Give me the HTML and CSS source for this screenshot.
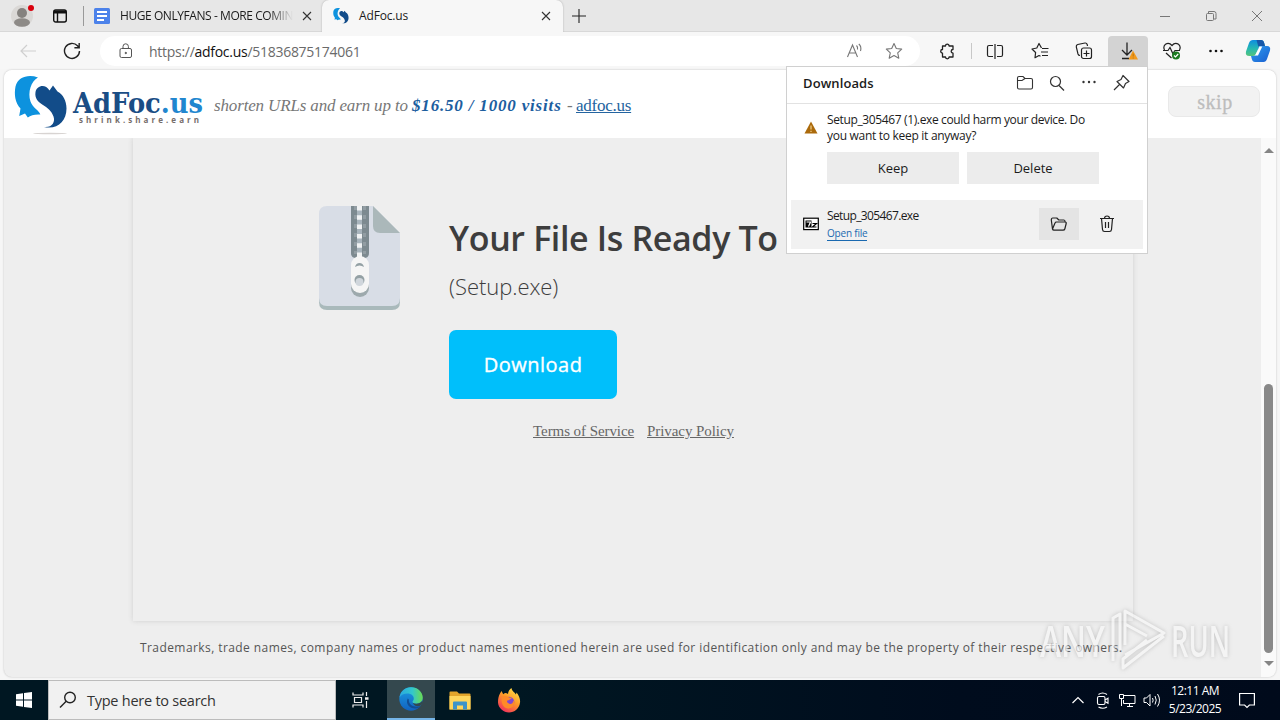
FILE: index.html
```
<!DOCTYPE html>
<html lang="en">
<head>
<meta charset="utf-8">
<title>AdFoc.us</title>
<link rel="stylesheet" href="styles.css">
</head>
<body>
<div class="tabs">
  <div class="profile"><svg width="26" height="28" viewBox="0 0 26 28"><circle cx="12" cy="14" r="11" fill="#dad8d6"/><circle cx="12" cy="11" r="5" fill="#85827f"/><ellipse cx="12" cy="20.5" rx="8" ry="4.2" fill="#8d8a87"/><circle cx="21" cy="6" r="3" fill="#d9000d"/></svg></div>
  <div class="tab-menu"><svg width="16" height="16" viewBox="0 0 16 16" fill="none" stroke="#111" stroke-width="1.4"><rect x="1.7" y="2" width="12.6" height="12" rx="2"/><path d="M2 4h12" stroke-width="3"/><path d="M5.5 4v10"/></svg></div>
  <div class="tab">
    <svg width="16" height="16" viewBox="0 0 16 16"><rect width="16" height="16" rx="1.5" fill="#4c82ea"/><path d="M3 4h10M3 8h10M3 12h7" stroke="#fff" stroke-width="1.8"/></svg>
    <span class="tab-title faded">HUGE ONLYFANS - MORE COMIN</span>
    <svg class="close" width="10" height="10" viewBox="0 0 10 10" stroke="#333" stroke-width="1.1"><path d="M1 1l8 8M9 1l-8 8"/></svg>
  </div>
  <div class="tab active">
    <svg width="16" height="16" viewBox="14 76 54 54"><use href="#swirl"/></svg>
    <span class="tab-title adf">AdFoc.us</span>
    <svg class="close" width="10" height="10" viewBox="0 0 10 10" stroke="#333" stroke-width="1.1"><path d="M1 1l8 8M9 1l-8 8"/></svg>
  </div>
  <div class="new-tab"><svg width="14" height="14" viewBox="0 0 14 14" stroke="#222" stroke-width="1.1"><path d="M7 0v14M0 7h14"/></svg></div>
  <div class="window-buttons">
    <svg width="46" height="32" viewBox="0 0 46 32" fill="none" stroke="#777"><path d="M18 16.5h10"/></svg>
    <svg width="46" height="32" viewBox="0 0 46 32" fill="none" stroke="#777"><rect x="18.500" y="13.500" width="7" height="7" rx="1"/><path d="M20.500 13v-1.500h5.500q2 0 2 2v5.500h-2"/></svg>
    <svg width="46" height="32" viewBox="0 0 46 32" fill="none" stroke="#777"><path d="M18 11l10 10M28 11l-10 10"/></svg>
  </div>
</div>

<div class="toolbar">
  <div class="slot back"><svg width="16" height="14" viewBox="0 0 16 14" fill="none" stroke="#cfcfcf" stroke-width="1.2"><path d="M16 7H1M7 1L1 7l6 6"/></svg></div>
  <div class="slot reload"><svg width="18" height="18" viewBox="0 0 18 18" fill="none" stroke="#222" stroke-width="1.4"><path d="M16.500 9a7.500 7.500 0 1 1-2-5.200L16 5.500M16.200 1v4.800h-4.800"/></svg></div>
  <div class="address">
    <svg class="lock" width="14" height="16" viewBox="0 0 14 16" fill="none" stroke="#555"><rect x="1" y="5.500" width="11.500" height="9" rx="1.500"/><path d="M4 5.500V3.500a2.700 2.700 0 0 1 5.400 0v2"/><circle cx="6.800" cy="10" r=".7" fill="#555"/></svg>
    <span class="url">https://<b>adfoc.us</b>/51836875174061</span>
    <svg class="read" width="18" height="16" viewBox="0 0 18 16" fill="none" stroke="#777" stroke-width="1.1"><path d="M2.500 14L7.500 2l5 12M4 10h7M11.500 2.500q1.500 1.500 1 4M13.800 1q3 2.500 1.700 7"/></svg>
    <svg class="fav" width="18" height="18" viewBox="0 0 18 18" fill="none" stroke="#777" stroke-width="1.1"><path d="M9 1.500l2.300 5 5.400.6-4 3.700 1.100 5.400L9 13.500l-4.800 2.700 1.100-5.400-4-3.700 5.400-.6z" stroke-linejoin="round"/></svg>
  </div>
  <div class="slot ext"><svg width="18" height="18" viewBox="0 0 18 18" fill="none" stroke="#222" stroke-width="1.3"><path d="M4.500 4h3a1.800 1.800 0 0 1 3.600 0H15v3.500a1.800 1.800 0 1 0 0 3.600V15h-3.900a1.800 1.800 0 0 1-3.600 0h-3v-3.900a1.800 1.800 0 0 1 0-3.600z" stroke-linejoin="round"/></svg></div>
  <div class="rule"></div>
  <div class="slot split"><svg width="18" height="16" viewBox="0 0 18 16" fill="none" stroke="#222" stroke-width="1.2"><path d="M7 2.500H3q-1.500 0-1.500 1.500v8q0 1.500 1.500 1.500h4M11 2.500h4q1.500 0 1.500 1.500v8q0 1.500-1.500 1.500h-4M9 1v15"/></svg></div>
  <div class="slot"><svg width="18" height="18" viewBox="0 0 18 18" fill="none" stroke="#222" stroke-width="1.2" stroke-linejoin="round"><path d="M10.500 6L8 1.500 5.800 6 1 7l3.600 3.500L4 15.700l4-2.200 1.500.8M11 6.500h6.500M10 10h7M11 13.500h6"/></svg></div>
  <div class="slot"><svg width="18" height="18" viewBox="0 0 18 18" fill="none" stroke="#222" stroke-width="1.2"><rect x="6.500" y="6" width="10" height="10.500" rx="2"/><path d="M11.500 8.500v6M8.500 11.500h6M5 13.500Q3.500 13.500 3 12L1.300 5Q1 3 2.700 2.500L10 1q1.700-.2 2.200 1.500l.3 1.500"/></svg></div>
  <div class="slot dl"><svg width="20" height="20" viewBox="0 0 20 20" fill="none" stroke="#222" stroke-width="1.300"><path d="M9 1.500v12M4 9l5 5 5-5M4 17.500h7"/><path d="M15 9.500L20 18.500H10.500z" fill="#f39a1c" stroke="none"/><path d="M15.200 12.500v3M15.200 16.500v1" stroke="#b87414" stroke-width="1"/></svg></div>
  <div class="slot heart"><svg width="20" height="18" viewBox="0 0 20 18" fill="none" stroke="#222" stroke-width="1.200"><path d="M2.500 8Q.800 4.500 3.500 2.300 7 .2 10 3.500 13-.2 16.500 2.300 19.200 4.500 17.500 8M1 8.500h5l2-3 2.800 6L13 8.500h5M4 11l5.500 5"/><circle cx="14" cy="13.500" r="4" fill="#1b7a20" stroke="none"/><path d="M12 13.500l1.500 1.500 2.700-3" stroke="#fff"/></svg></div>
  <div class="slot"><svg width="16" height="4" viewBox="0 0 16 4" fill="#111"><circle cx="2.500" cy="2" r="1.300"/><circle cx="8" cy="2" r="1.300"/><circle cx="13.500" cy="2" r="1.300"/></svg></div>
  <div class="slot copilot"><svg width="26" height="24" viewBox="0 0 26 24">
    <defs><linearGradient id="cp1" x1="0" y1="0" x2="0" y2="1"><stop offset="0" stop-color="#0d8de0"/><stop offset=".55" stop-color="#26b9b0"/><stop offset="1" stop-color="#55c47c"/></linearGradient><linearGradient id="cp2" x1="0" y1="0" x2="1" y2="1"><stop offset="0" stop-color="#2e9df0"/><stop offset="1" stop-color="#1a5fd0"/></linearGradient></defs>
    <path d="M8 1h8q2.500 0 3.200 3l.8 3h-4q-2 0-2.700 2.500L11.500 14q-1 3-3.500 3H4.500Q0 17 1 12.500L4 4Q5 1 8 1z" fill="url(#cp1)"/><path d="M11.500 1H16q2.500 0 3.200 3l.8 3h-5q-1 0-1.700.5z" fill="#1757a8"/>
    <path d="M18.500 23H10q-2.500 0-3.200-3L6 17h2.500q2.500 0 3.200-3L13 9.500Q14 7 16 7h6q4 0 3 4.500l-3 8.500q-1 3-3.500 3z" fill="url(#cp2)"/><path d="M14.500 7.500h2.800L13 16.500h-3z" fill="#fff"/></svg></div>
</div>

<div class="viewport">
  <div class="site-header">
    <svg class="logo" width="192" height="64" viewBox="13 72 192 64">
      <defs><g id="swirl"><path d="M38 77.500C28 74 18 77 15.500 86.500c-1.500 8-.5 16 5 22l-1.300 7.500 5.800-2.500 2.800 4c3-2.500 7-3.300 12.500-3-1-4-7.500-6.500-9.800-13-3-9 .5-20.500 7.500-24z" fill="#0d92de"/><path d="M35.500 92c1-6 9.500-9 14-1.500l3.500-5 4.500 6c5.500 3 9 9 9 17 0 13-9.500 21.500-22.500 18.500 8 1 11.500-5 9.500-10.500-2-6-6.500-9-10.500-11.500-5-3-8.500-7-7.500-13z" fill="#124c89"/></g></defs>
      <use href="#swirl"/><ellipse cx="50" cy="133.500" rx="17" ry=".8" fill="#d8d4d2"/>
      <text class="logo-name" x="73" y="113" textLength="130" lengthAdjust="spacingAndGlyphs">AdFoc<tspan class="light">.us</tspan></text>
      <text class="logo-tag" x="79" y="123" textLength="120">shrink.share.earn</text>
    </svg>
    <div class="slogan"><span class="s1">shorten URLs and earn up to</span><span class="s2">$16.50 / 1000 visits</span><span class="s3">-</span><span class="s4">adfoc.us</span></div>
    <div class="skip">skip</div>
  </div>
  <div class="scroll-area">
    <div class="page">
      <div class="card">
        <svg class="zip" width="81" height="105" viewBox="0 0 81 105"><path d="M0 50H81V96q0 8-8 8H8q-8 0-8-8z" fill="#a9b9bb"/><path d="M8 0H54L81 27V92q0 8-8 8H8q-8 0-8-8V8Q0 0 8 0z" fill="#d8dde6"/><path d="M54 0L81 27H61q-7 0-7-7z" fill="#abb8ba"/><path d="M32 0H50V47q0 5-5 5h-8q-5 0-5-5z" fill="#7d8a90"/><path d="M36.500 0v48M45.500 0v48" stroke="#929da3" stroke-width="3" stroke-dasharray="4 5"/><path d="M40.500 0v51" stroke="#a9b5bd" stroke-width="5"/><path d="M40.500 0v52" stroke="#f0f2f3" stroke-width="5" stroke-dasharray="4.500 4.800"/><rect x="32" y="54" width="18" height="37" rx="9" fill="#9da9ad"/><rect x="32" y="50" width="18" height="37" rx="9" fill="#f5f5f5"/><path d="M36 61a4.700 5.500 0 0 1 9 0q-4.500-3-9 0z" fill="#93a0a4"/><circle cx="40.500" cy="74" r="5" fill="#93a0a4"/><circle cx="40.500" cy="76" r="4" fill="#d0d6dc"/></svg>
        <div class="offer">
          <div class="title">Your File Is Ready To</div>
          <div class="file">(Setup.exe)</div>
          <div class="download"><span>Download</span></div>
          <div class="legal"><span class="tos">Terms of Service</span><span class="pp">Privacy Policy</span></div>
        </div>
      </div>
      <div class="trademark">Trademarks, trade names, company names or product names mentioned herein are used for identification only and may be the property of their respective owners.</div>
    </div>
    <div class="scrollbar"><i class="up"></i><div class="track"><div class="thumb"></div></div><i class="down"></i></div>
  </div>
</div>

<div class="taskbar">
  <div class="start"><svg width="16" height="16" viewBox="0 0 16 16" fill="#fff"><path d="M0 2.200l7-1v6.300H0zM8 1l8-1v7.500H8zM0 8.500h7v6.300l-7-1zM8 8.500h8V16l-8-1z"/></svg></div>
  <div class="search"><svg width="18" height="18" viewBox="0 0 18 18" fill="none" stroke="#222" stroke-width="1.400"><circle cx="11" cy="6.500" r="5.300"/><path d="M7.200 10.300L1 16.500"/></svg><span>Type here to search</span></div>
  <div class="task"><svg width="18" height="16" viewBox="0 0 18 16" fill="none" stroke="#eee" stroke-width="1.200"><path d="M1 .5v2.500h10V.5M1 15.500V13h10v2.500M2.500 5.500h7v5h-7zM14.500 0v4M14.500 9v7"/><path d="M13 6.500h3.500" stroke-width="2.500"/></svg></div>
  <div class="task edge"><svg width="24" height="24" viewBox="0 0 24 24"><defs><linearGradient id="e1"><stop offset="0" stop-color="#2aa8e0"/><stop offset=".55" stop-color="#33c7cc"/><stop offset="1" stop-color="#6bdb50"/></linearGradient><linearGradient id="e2" x1="0" y1="0" x2="0" y2="1"><stop offset="0" stop-color="#1b9de2"/><stop offset="1" stop-color="#1262bf"/></linearGradient></defs><circle cx="12" cy="12" r="11.700" fill="url(#e2)"/><path d="M.5 10.500C1.500 4 6.500.3 12 .3c7 0 11.700 5 11.700 10.200 0 4-3 6.200-6.500 6.200-2.500 0-3.700-1-3.700-2 0-.8 1.300-1.200 1.300-3.200 0-2.700-2.700-5-6.300-5-3.700 0-6.500 1.500-8 4z" fill="url(#e1)"/><path d="M8.700 11.500C6 17 11 22 17 21.500c2 0 3.600-1.200 4.700-2.700C17 21 9.500 19 9.800 12.500z" fill="#124d93"/><path d="M13.500 14.700c0 1 1.200 2 3.700 2 2.500 0 4.600-1 5.800-2.700l.9 1-1.700 3.300c-4 1.900-8 .7-8.700-3.600z" fill="#34484e"/></svg></div>
  <div class="task"><svg width="22" height="19" viewBox="0 0 22 19"><path d="M.5 1.500Q.5.500 1.500.500H8l2 2h10.500q1 0 1 1V18.500H.5z" fill="#e3a52b"/><path d="M.5 5h21v13.500H.5z" fill="#ffd65d"/><path d="M4 18.500v-7q0-1 1-1h12q1 0 1 1v7h-4v-4H8v4z" fill="#3e94c9"/></svg></div>
  <div class="task fox"><svg width="24" height="25" viewBox="0 0 24 25"><defs><linearGradient id="f1" x1=".8" y1="0" x2=".2" y2="1"><stop offset="0" stop-color="#ffe24a"/><stop offset=".45" stop-color="#ff9a28"/><stop offset="1" stop-color="#f02960"/></linearGradient></defs><path d="M3 5.500L4.500 3l1.700 3.300L8 5q2 0 3 1c.3-3 1.800-5 3.500-6 .3 3 3 4 4.500 6.500l.5-2c2.500 3 4 6.500 3.500 10-.6 6-5.500 10-11 10S1.300 20 1 14.500C1 11 1.500 8 3 5.500z" fill="url(#f1)"/><circle cx="12" cy="14" r="5.300" fill="#8047d2"/><path d="M5 8.500c3-1.500 5-.5 7 1l3 .5-3.300 2.300c-2 0-2 1.500-1 2.500 2.500 2.500 6 .5 5.500-2.800 2.500 3.500 0 8.500-5 8.500C6 20.500 3.500 14 5 8.500z" fill="#ff8a28"/></svg></div>
  <div class="tray">
    <svg width="12" height="8" viewBox="0 0 12 8" fill="none" stroke="#fff" stroke-width="1.200"><path d="M.5 7L6 1.500 11.500 7"/></svg>
    <svg class="meet" width="14" height="17" viewBox="0 0 14 17" fill="none" stroke="#fff" stroke-width="1.100"><rect x="1.500" y="4.500" width="7.500" height="8" rx="1.500"/><path d="M9 8l3-1.700v5L9 9.500M2.500 2.500q4-3 8.500 0M2.500 15q4 2.500 8.500 0"/></svg>
    <svg class="net" width="17" height="15" viewBox="0 0 17 15" fill="none" stroke="#fff"><path d="M5 2.500h11v8H4.500V7M8 13.500h6M10.500 10.500v3M.5 1.500h4v4h-4zM2.500 5.500V13"/></svg>
    <svg class="vol" width="18" height="14" viewBox="0 0 18 14" fill="none" stroke="#fff"><path d="M1 5v4.500h2.500L7 13V1.500L3.500 5zM9.500 5q1.300 2 0 4.500M12 3q2.500 4 0 8.500M14.500 1q4 6 0 12.500"/></svg>
    <div class="clock"><span class="time">12:11 AM</span><span class="date">5/23/2025</span></div>
    <svg class="note" width="16" height="17" viewBox="0 0 16 17" fill="none" stroke="#fff" stroke-width="1.200"><path d="M.6 1.500h14.800v11.500h-5L8 15.500 5.600 13h-5z"/></svg>
  </div>
</div>

<div class="downloads">
  <div class="dl-head"><span class="dl-title">Downloads</span>
    <div class="dl-tools">
    <svg width="32" height="18" viewBox="0 0 32 18" fill="none" stroke="#333" stroke-width="1.100"><path d="M8.500 4q0-1.500 1.500-1.500h4l2 2h6q1.500 0 1.500 1.500v7.500q0 1.500-1.500 1.500H10q-1.500 0-1.500-1.500zM8.500 6.500H13l3-2"/></svg>
    <svg width="32" height="18" viewBox="0 0 32 18" fill="none" stroke="#333" stroke-width="1.200"><circle cx="14.500" cy="7.500" r="5"/><path d="M18 11.500l5 5"/></svg>
    <svg width="32" height="18" viewBox="0 0 32 18" fill="#333"><circle cx="10.500" cy="8" r="1.200"/><circle cx="16" cy="8" r="1.200"/><circle cx="21.500" cy="8" r="1.200"/></svg>
    <svg width="32" height="18" viewBox="0 0 32 18" fill="none" stroke="#333" stroke-width="1.200" stroke-linejoin="round"><path d="M18 1.500l6 6-3.500 2-2 4.500-6.500-6.500L16 5.500zM14.500 10.500L9 16"/></svg>
    </div></div>
  <div class="warning">
    <svg width="14" height="13" viewBox="0 0 14 13"><path d="M7 .5L13.500 12.500H.5z" fill="#ab6a0b"/><path d="M7 4.500v4M7 9.800v1.300" stroke="#f7d99b" stroke-width="1.100"/></svg>
    <div><div class="m1">Setup_305467 (1).exe could harm your device. Do</div><div class="m2">you want to keep it anyway?</div></div>
  </div>
  <div class="choices"><div>Keep</div><div>Delete</div></div>
  <div class="entry">
    <svg class="seven" width="16" height="14" viewBox="0 0 16 14"><rect x=".7" y="1.200" width="14.600" height="11.400" fill="#fff" stroke="#000" stroke-width="1.200"/><rect x="2.500" y="3.500" width="6" height="7" fill="#000"/><path d="M3.500 5h4L5.500 9.500" stroke="#fff" stroke-width="1.200" fill="none"/><path d="M9.500 6.500h4l-4 3.500h4" stroke="#000" stroke-width="1.200" fill="none"/></svg>
    <div class="names"><div class="n1">Setup_305467.exe</div><div class="n2">Open file</div></div>
    <div class="folder"><svg width="18" height="16" viewBox="0 0 18 16" fill="none" stroke="#222" stroke-width="1.200" stroke-linejoin="round"><path d="M2.500 13L1.300 4q0-2 1.500-2h4l2 2H14q1 0 1.200 2M2.500 13q.3 1.200 1.500 1.200h9q1.500 0 1.800-1.200l1.400-5.500Q16.500 6 15 6H6.500Q5.300 6 5 7z"/></svg></div>
    <svg class="trash" width="16" height="18" viewBox="0 0 16 18" fill="none" stroke="#222" stroke-width="1.200"><path d="M1 3.500h14M5.500 3.500q0-2.500 2.500-2.500t2.500 2.500M2.500 3.500l1 11q.2 2 2 2h5q1.800 0 2-2l1-11M6.500 7v6M9.500 7v6"/></svg>
  </div>
</div>

<svg class="watermark" width="204" height="70" viewBox="0 0 204 70">
  <text x="4" y="50" textLength="65" lengthAdjust="spacingAndGlyphs">ANY</text><text x="135" y="50" textLength="59" lengthAdjust="spacingAndGlyphs">RUN</text>
  <path d="M77 54V11l7-4v36M89 38V4l39 22-39 22M89 17l22 12M128 29L87 61V52l24-19" fill="none" stroke="#f8f8f8" stroke-width="3" stroke-linejoin="round"/>
</svg>
</body>
</html>
```
FILE: styles.css
```
* { box-sizing: border-box; }
body { margin: 0; width: 1280px; height: 720px; overflow: hidden; position: relative; display: flex; flex-direction: column; background: #f6f6f6; font-family: "Open Sans", "Noto Sans", sans-serif; color: #1b1b1b; white-space: nowrap; }
svg { display: block; flex: none; }
.tabs { height: 32px; flex: none; display: flex; align-items: center; background: #e7e7e7; border-bottom: 1px solid #d8d8d8; }
.profile { width: 44px; padding-left: 10px; }
.tab-menu { width: 40px; height: 20px; padding: 2px 0 0 8px; border-right: 1px solid #999; }
.tab { width: 238px; height: 32px; display: flex; align-items: center; padding: 0 10px; font-size: 12px; }
.tab.active { width: 241px; background: #f7f7f7; border-radius: 7px 7px 0 0; padding-left: 11px; box-shadow: 0 0 2px #aaa; }
.tab-title { margin-left: 10px; flex: 1; letter-spacing: -.15px; }
.tab-title.faded { -webkit-mask-image: linear-gradient(90deg, #000 86%, transparent 100%); mask-image: linear-gradient(90deg, #000 86%, transparent 100%); letter-spacing: -.43px; }
.close { margin-left: 9px; }
.tab.active .close { margin-right: 2px; }
.new-tab { width: 40px; padding-left: 9px; }
.window-buttons { margin-left: auto; display: flex; }
.toolbar { height: 37px; flex: none; display: flex; align-items: center; background: #f7f7f7; padding-top: 1px; }
.slot { width: 44px; height: 30px; display: flex; align-items: center; justify-content: center; }
.slot.back { width: 56px; }
.slot.reload { width: 32px; margin-right: 12px; }
.address { width: 820px; height: 30px; background: #fff; border-radius: 15px; display: flex; align-items: center; padding: 0 17px 0 19px; font-size: 14px; color: #6a6a6a; }
.url { margin-left: 16px; flex: 1; letter-spacing: -.28px; }
.url b { font-weight: 400; color: #111; }
.fav { margin-left: 22px; }
.slot.ext { width: 51px; padding-left: 3px; }
.rule { width: 1px; height: 16px; background: #c8c8c8; }
.slot.split { width: 46px; }
.slot.dl { width: 40px; margin-left: 2px; background: #d3d3d3; border-radius: 4px 4px 0 0; }
.slot.heart { margin-left: 2px; }
.slot.copilot { width: 40px; }
.viewport { margin: 1px 4px 3px; height: 607px; flex: none; border-radius: 8px; overflow: hidden; box-shadow: 0 0 2px #bbb; display: flex; flex-direction: column; background: #eee; }
.site-header { height: 68px; flex: none; background: #fff; display: flex; align-items: center; padding: 0 16px 0 9px; }
.logo-name { font: 700 28px "DejaVu Serif", serif; fill: #1a4d85; }
.logo-name .light { fill: #2186cf; }
.logo-tag { font: 700 8px "Open Sans", sans-serif; fill: #766d6b; }
.slogan { flex: 1; display: flex; align-items: baseline; margin: 4px 0 0 9px; font: 17px "Liberation Serif", serif; color: #777; }
.s1 { width: 198px; font-style: italic; letter-spacing: -.15px; }
.s2 { width: 155px; font: italic 700 17px "Liberation Serif", serif; color: #1c5e9f; letter-spacing: .82px; }
.s3 { width: 9px; }
.s4 { color: #2464a0; text-decoration: underline; letter-spacing: -.25px; }
.skip { width: 92px; height: 31px; margin-top: -6px; border: 1px solid #e9e9e9; border-radius: 8px; background: #f2f2f2; color: #bdbdbd; font: 20px/31px "Liberation Serif", serif; -webkit-text-stroke: .3px #bdbdbd; text-align: center; letter-spacing: .6px; padding-left: 2px; }
.scroll-area { flex: 1; display: flex; }
.page { width: 1257px; padding-left: 129px; }
.card { width: 1000px; height: 483px; display: flex; padding: 68px 0 0 186px; box-shadow: 0 0 5px #cfcfcf; clip-path: inset(0 -8px -8px -8px); }
.offer { margin-left: 49px; color: #3d3d3d; }
.title { font-size: 34px; font-weight: 600; line-height: 48px; margin-top: 8px; letter-spacing: -.37px; }
.file { font-size: 22px; font-weight: 300; line-height: 30px; margin-top: 9px; letter-spacing: -.05px; }
.download { width: 168px; height: 69px; margin-top: 29px; border-radius: 7px; background: #00bffb; color: #fff; font-size: 20px; -webkit-text-stroke: .35px #fff; display: flex; align-items: center; justify-content: center; letter-spacing: .5px; }
.legal { display: flex; padding: 23px 0 0 84px; font: 15px/19px "Liberation Serif", serif; color: #666; text-decoration: underline; letter-spacing: -.07px; }
.tos { width: 114px; }
.trademark { margin: 18px 0 0 7px; font-size: 12px; line-height: 18px; color: #555; letter-spacing: .42px; }
.scrollbar { width: 15px; background: #fafafa; display: flex; flex-direction: column; align-items: center; padding: 10px 0 11px; }
.up, .down { border: 5px solid transparent; height: 0; }
.up { border-top: 0; border-bottom: 5px solid #858585; }
.down { border-bottom: 0; border-top: 5px solid #858585; }
.track { flex: 1; padding-top: 231px; display: flex; }
.thumb { width: 9px; height: 269px; border-radius: 5px; background: #898989; }
.taskbar { height: 40px; flex: none; display: flex; background: linear-gradient(90deg, #001722 0, #001722 40%, #000c1d 75%, #000a1b); }
.start { width: 48px; display: flex; align-items: center; justify-content: center; }
.search { width: 288px; background: #f1f1f1; border: 1px solid #bcbcbc; display: flex; align-items: center; padding: 0 0 0 10px; font-size: 14.5px; color: #333; }
.search span { margin: 0 0 0 10px; letter-spacing: -.25px; }
.task { width: 49px; display: flex; align-items: center; justify-content: center; }
.task:nth-child(3) { width: 51px; padding-right: 2px; }
.edge { width: 48px; background: #34484e; border-bottom: 2px solid #75b5e8; }
.tray { margin-left: auto; display: flex; align-items: center; padding-right: 25px; color: #fff; font-size: 12px; }
.meet { margin-left: 12px; }
.net { margin-left: 9px; }
.vol { margin-left: 7px; }
.clock { display: flex; flex-direction: column; width: 68px; text-align: center; line-height: 18px; letter-spacing: -.5px; margin-bottom: 1px; }
.note { margin-left: 10px; }
.downloads { position: absolute; left: 786px; top: 66px; width: 362px; height: 188px; background: #fff; border: 1px solid #d0d0d0; font-size: 12px; }
.dl-head { height: 37px; border-bottom: 1px solid #e2e2e2; display: flex; justify-content: space-between; align-items: center; padding: 0 10px 4px 16px; }
.dl-title { font-size: 13px; font-weight: 600; letter-spacing: .1px; }
.dl-tools { display: flex; }
.warning { display: flex; align-items: center; gap: 9px; padding: 8px 0 0 17px; line-height: 16px; }
.warning svg { margin-top: -2px; }
.m1 { letter-spacing: -.37px; }
.m2 { letter-spacing: -.29px; }
.choices { display: flex; gap: 8px; margin: 8px 0 0 40px; }
.choices div { width: 132px; height: 32px; background: #ececec; text-align: center; font-size: 13px; line-height: 32px; }
.entry { height: 49px; margin: 16px 4px 0; background: #f1f1f1; display: flex; align-items: center; padding: 0 0 1px 12px; }
.names { width: 212px; margin: 0 0 0 8px; line-height: 16px; display: flex; flex-direction: column; align-items: flex-start; }
.n1 { letter-spacing: -.63px; }
.n2 { font-size: 10px; line-height: 14px; margin-top: 2px; color: #1a69b0; border-bottom: 1px solid #1a69b0; letter-spacing: -.2px; }
.folder { width: 40px; height: 32px; background: #e4e4e4; display: flex; align-items: center; justify-content: center; }
.trash { margin-left: 20px; }
.watermark { position: absolute; left: 1036px; top: 607px; opacity: .68; filter: drop-shadow(0 0 2px #aaa); }
.watermark text { font: 600 43px "Open Sans", sans-serif; fill: #f8f8f8; }
```
